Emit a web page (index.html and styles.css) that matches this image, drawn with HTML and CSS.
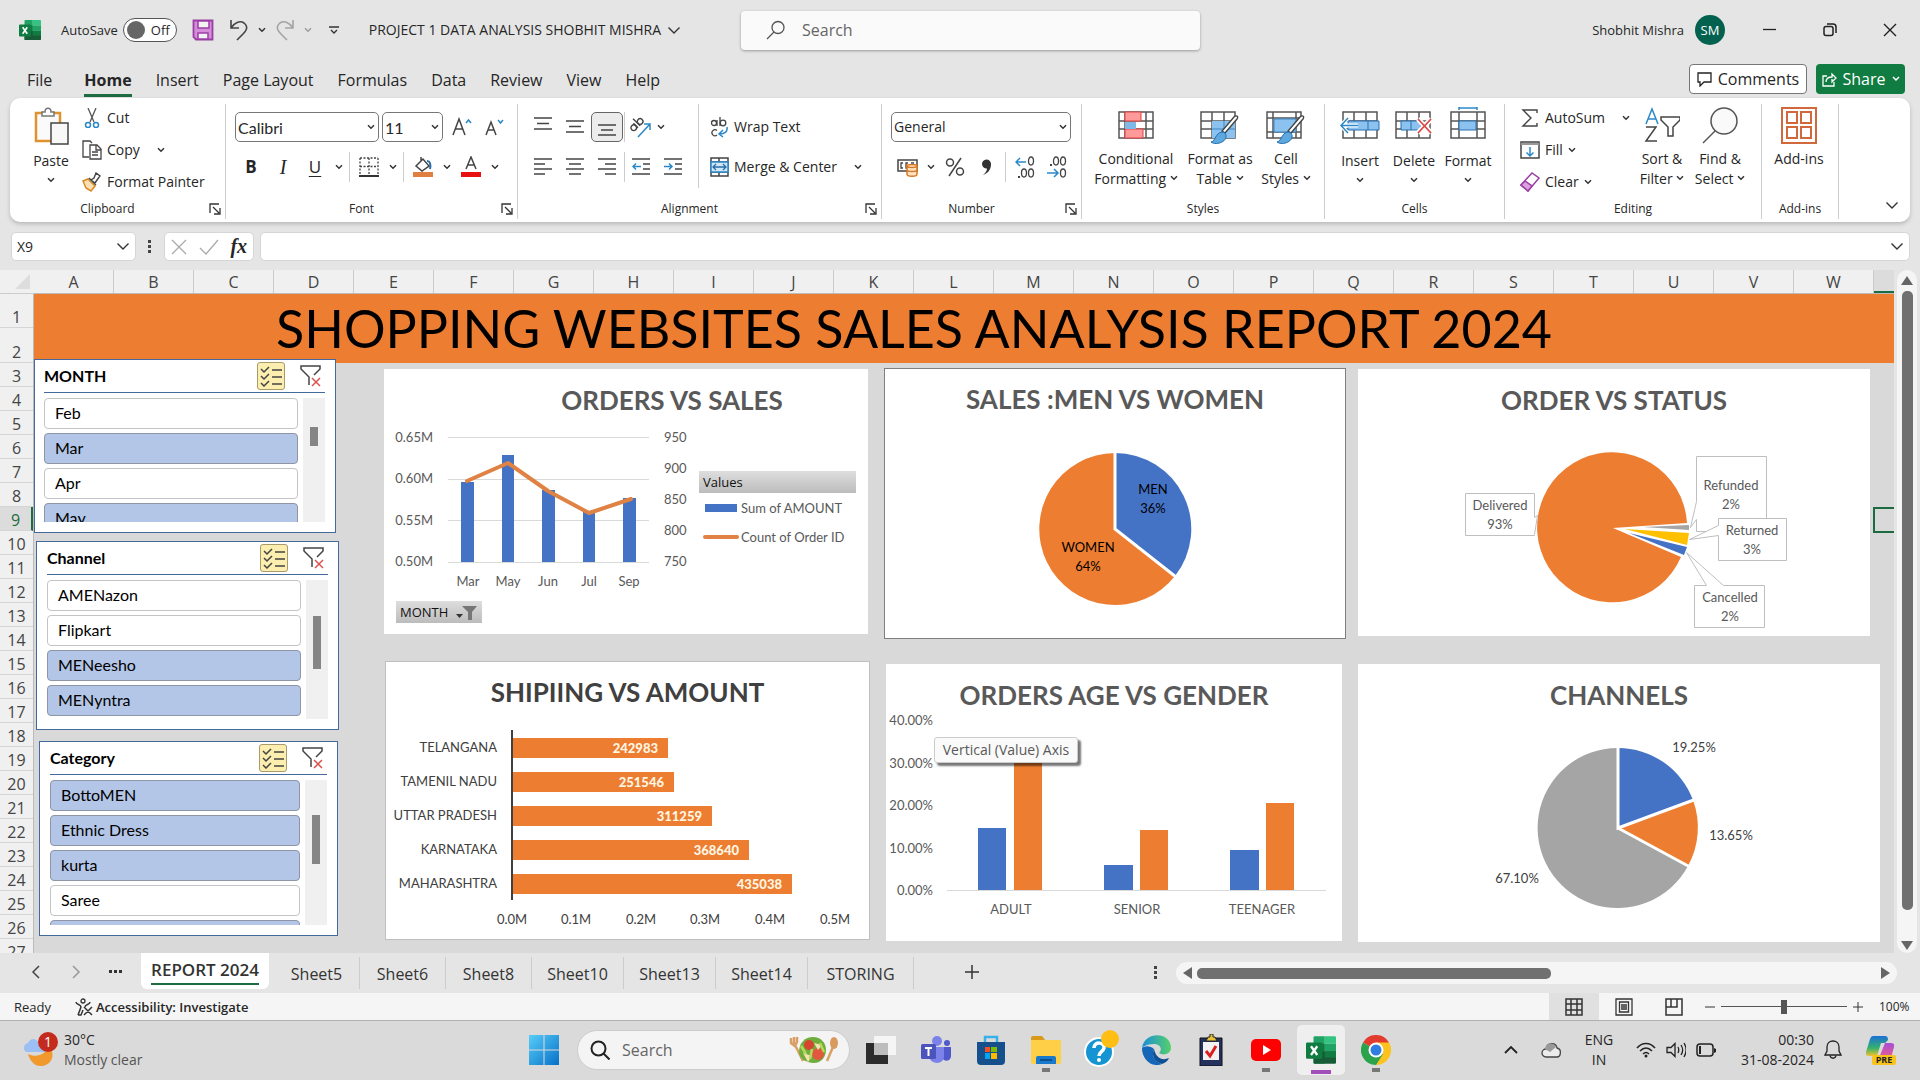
FILE: index.html
```html
<!DOCTYPE html>
<html lang="en">
<head>
<meta charset="utf-8">
<title>PROJECT 1 DATA ANALYSIS SHOBHIT MISHRA - Excel</title>
<link rel="stylesheet" href="styles.css">
</head>
<body>
<svg class="defs" aria-hidden="true">
  <symbol id="chev" viewBox="0 0 8 6"><path d="M1 1.2l3 3 3-3" fill="none" stroke="#333" stroke-width="1.5"/></symbol>
  <symbol id="chevL" viewBox="0 0 14 9"><path d="M1.5 1.5l5.500 5.500 5.500-5.500" fill="none" stroke="#333" stroke-width="1.400"/></symbol>
  <symbol id="launch" viewBox="0 0 12 12"><path d="M1 10V1h9M4 4l6 6M11 5v6H5" fill="none" stroke="#333" stroke-width="1.300"/></symbol>
  <symbol id="multi" viewBox="0 0 22 22"><path d="M1 4l3 3 5-5M1 11l3 3 5-5M1 18l3 3 5-5M12 5h10M12 12h10M12 19h10" fill="none" stroke="#444" stroke-width="1.500"/></symbol>
  <symbol id="clear" viewBox="0 0 22 22"><path d="M9 20V12L1 4V1h19v3l-6 6" fill="none" stroke="#444" stroke-width="1.500"/><path d="M12 13l8 8M20 13l-8 8" stroke="#d9534f" stroke-width="1.500"/></symbol>
  <symbol id="excel" viewBox="0 0 24 24"><path d="M7 1h8v22H7a1 1 0 0 1-1-1V2a1 1 0 0 1 1-1z" fill="#21a366"/><path d="M15 1h8a1 1 0 0 1 1 1v5h-9z" fill="#33c481"/><path d="M6 7h9v6H6z" fill="#107c41"/><path d="M15 7h9v6h-9z" fill="#21a366"/><path d="M6 13h18v9a1 1 0 0 1-1 1H7a1 1 0 0 1-1-1z" fill="#185c37"/><path d="M15 13h9v5h-9z" fill="#107c41"/><rect y="6" width="13" height="13" rx="1" fill="#107c41"/><path d="M4 9l5 7M9 9l-5 7" stroke="#fff" stroke-width="1.800"/></symbol>
</svg>

<header class="titlebar">
  <svg class="app" width="22" height="22"><use href="#excel"/></svg>
  <label class="autosave"><span>AutoSave</span><input type="checkbox" class="vh"><span class="toggle"><i></i>Off</span></label>
  <button class="tb" aria-label="Save"><svg width="22" height="22" viewBox="0 0 22 22"><path d="M1.500 1.500h19v19H4l-2.500-2.500z" fill="#d58ddb" stroke="#9b3fa5" stroke-width="1.800"/><path d="M6 2h11v7H6zM6 14h10v6H6z" fill="#f3f3f3" stroke="#9b3fa5" stroke-width="1.500"/></svg></button>
  <button class="tb undo" aria-label="Undo"><svg width="20" height="22" viewBox="0 0 20 22"><path d="M2 1v8h8M2 9C5 4 11 1 15 4c5 4 2 8-1 11l-6 6" fill="none" stroke="#444" stroke-width="1.600"/></svg><svg width="8" height="6"><use href="#chev"/></svg></button>
  <button class="tb undo off" aria-label="Redo"><svg width="20" height="22" viewBox="0 0 20 22"><path d="M18 1v8h-8M18 9C15 4 9 1 5 4 0 8 3 12 6 15l6 6" fill="none" stroke="#444" stroke-width="1.600"/></svg><svg width="8" height="6"><use href="#chev"/></svg></button>
  <button class="tb more" aria-label="Customize toolbar"><svg width="10" height="9" viewBox="0 0 10 9"><path d="M0 1h10M2 4l3 3 3-3" fill="none" stroke="#333" stroke-width="1.400"/></svg></button>
  <button class="doc">PROJECT 1 DATA ANALYSIS SHOBHIT MISHRA <svg width="14" height="9"><use href="#chevL"/></svg></button>
  <label class="search"><svg width="20" height="20" viewBox="0 0 20 20"><circle cx="12" cy="7.500" r="6" fill="none" stroke="#555" stroke-width="1.300"/><path d="M8 12l-7 7" stroke="#555" stroke-width="1.300"/></svg><input type="text" placeholder="Search" aria-label="Search"></label>
  <div class="user"><span>Shobhit Mishra</span><b>SM</b></div>
  <div class="win">
    <button aria-label="Minimize"><svg width="14" height="14"><path d="M0 6.500h13" stroke="#222" stroke-width="1.300"/></svg></button>
    <button aria-label="Restore"><svg width="14" height="14" viewBox="0 0 14 14"><rect x="1" y="3.500" width="9" height="9" rx="2" fill="none" stroke="#222" stroke-width="1.500"/><path d="M4 1h6a3 3 0 0 1 3 3v6" fill="none" stroke="#222" stroke-width="1.500"/></svg></button>
    <button aria-label="Close"><svg width="14" height="14"><path d="M1 1l12 12M13 1L1 13" stroke="#222" stroke-width="1.400"/></svg></button>
  </div>
</header>

<nav class="tabs">
  <a href="#" class="file">File</a><a href="#" class="on">Home</a><a href="#">Insert</a><a href="#">Page Layout</a><a href="#">Formulas</a><a href="#">Data</a><a href="#">Review</a><a href="#">View</a><a href="#">Help</a>
  <button class="comments"><svg width="15" height="15" viewBox="0 0 15 15"><path d="M1 1h13v9H7l-4 4v-4H1z" fill="none" stroke="#222" stroke-width="1.300"/></svg>Comments</button>
  <button class="share"><svg width="15" height="15" viewBox="0 0 15 15"><path d="M5 4H1v10h11v-4M4 10c0-4 3-5 6-5V2l4 4-4 4V7" fill="none" stroke="#fff" stroke-width="1.300"/></svg>Share<svg width="8" height="6" viewBox="0 0 8 6"><path d="M1 1l3 3 3-3" fill="none" stroke="#fff" stroke-width="1.500"/></svg></button>
</nav>

<section class="ribbon">
  <div class="group g-clip">
    <div class="body">
      <button class="big paste"><svg width="36" height="38" viewBox="0 0 36 38"><path d="M3 6h24v28H3z" fill="#fafafa" stroke="#e0922f" stroke-width="2.500"/><path d="M9 9V5h3c0-5 6-5 6 0h3v4z" fill="#fff" stroke="#777" stroke-width="1.500"/><path d="M18 16h17v21H18z" fill="#f8f8f8" stroke="#444" stroke-width="1.500"/></svg><span>Paste</span><svg width="8" height="6"><use href="#chev"/></svg></button>
      <div class="stack">
        <button><svg width="20" height="20" viewBox="0 0 20 20"><path d="M6 0l6 14M14 0L8 14" stroke="#555" stroke-width="1.300"/><circle cx="6" cy="17" r="2.500" fill="none" stroke="#2b88c8" stroke-width="1.500"/><circle cx="14" cy="17" r="2.500" fill="none" stroke="#2b88c8" stroke-width="1.500"/></svg>Cut</button>
        <button><svg width="20" height="20" viewBox="0 0 20 20"><path d="M7 17H1V1h7l2 2M8 5h7l4 4v10H8zM14 5v5h5M10 12h6M10 15h6" fill="none" stroke="#444" stroke-width="1.300"/></svg>Copy<svg class="far" width="8" height="6"><use href="#chev"/></svg></button>
        <button><svg width="20" height="20" viewBox="0 0 20 20"><path d="M1 9l5-2 7 7-4 5-5-3z" fill="#fbe0b5" stroke="#d98a1f" stroke-width="1.500"/><path d="M7 6l7 7M9 8l3-2 2-5 4 3-3 4-2 3z" fill="#fff" stroke="#444" stroke-width="1.400"/></svg>Format Painter</button>
      </div>
    </div>
    <footer><span>Clipboard</span><button class="launch" aria-label="Clipboard settings"><svg width="12" height="12"><use href="#launch"/></svg></button></footer>
  </div>

  <div class="group g-font">
    <div class="body rows">
      <div class="row">
        <div class="sel s-font"><select aria-label="Font"><option>Calibri</option></select><svg width="8" height="6"><use href="#chev"/></svg></div>
        <div class="sel s-size"><select aria-label="Font size"><option>11</option></select><svg width="8" height="6"><use href="#chev"/></svg></div>
        <button class="ib" aria-label="Increase font size"><svg width="20" height="20" viewBox="0 0 20 20"><path d="M1 18L7 2l6 16M3 12h8" fill="none" stroke="#444" stroke-width="1.500"/><path d="M14 6l2.500-3L19 6" fill="none" stroke="#2b88c8" stroke-width="1.500"/></svg></button>
        <button class="ib" aria-label="Decrease font size"><svg width="20" height="20" viewBox="0 0 20 20"><path d="M2 18L7 5l5 13M4 13h6" fill="none" stroke="#444" stroke-width="1.500"/><path d="M14 3l2.500 3L19 3" fill="none" stroke="#2b88c8" stroke-width="1.500"/></svg></button>
      </div>
      <div class="row">
        <button class="ib bold">B</button><button class="ib ital">I</button><button class="ib under">U</button><button class="ch" aria-label="Underline options"><svg width="8" height="6"><use href="#chev"/></svg></button><i class="sep"></i>
        <button class="ib" aria-label="Borders"><svg width="20" height="20" viewBox="0 0 20 20"><path d="M1 1h18M1 1v17M19 1v17M10 1v17M1 9.500h18" fill="none" stroke="#444" stroke-width="1.300" stroke-dasharray="2 1.500"/><path d="M0 19h20" stroke="#333" stroke-width="2"/></svg></button><button class="ch" aria-label="Border options"><svg width="8" height="6"><use href="#chev"/></svg></button><i class="sep"></i>
        <button class="ib" aria-label="Fill color"><svg width="22" height="22" viewBox="0 0 22 22"><path d="M4 10l7-7 6 7-7 5zM9 5V1" fill="#fff" stroke="#444" stroke-width="1.500"/><path d="M15 5c3 0 4 3 3 8" fill="none" stroke="#2b6ca8" stroke-width="2"/><path d="M1 16h20v5H1z" fill="#e08040"/></svg></button><button class="ch" aria-label="Fill options"><svg width="8" height="6"><use href="#chev"/></svg></button>
        <button class="ib" aria-label="Font color"><svg width="22" height="22" viewBox="0 0 22 22"><path d="M6 13l5-12 5 12M8 9h6" fill="none" stroke="#444" stroke-width="1.500"/><path d="M1 16h20v5H1z" fill="#e81010"/></svg></button><button class="ch" aria-label="Font color options"><svg width="8" height="6"><use href="#chev"/></svg></button>
      </div>
    </div>
    <footer><span>Font</span><button class="launch" aria-label="Font settings"><svg width="12" height="12"><use href="#launch"/></svg></button></footer>
  </div>

  <div class="group g-align">
    <div class="body">
      <div class="rows aleft">
        <div class="row">
          <button class="ib" aria-label="Top align"><svg width="18" height="20"><path d="M0 1h18M3 6.500h12M0 12h18" stroke="#444" stroke-width="1.500"/></svg></button>
          <button class="ib" aria-label="Middle align"><svg width="18" height="20"><path d="M0 4h18M3 9.500h12M0 15h18" stroke="#444" stroke-width="1.500"/></svg></button>
          <button class="ib pressed" aria-label="Bottom align"><svg width="18" height="20"><path d="M0 8h18M3 13h12M0 18h18" stroke="#444" stroke-width="1.500"/></svg></button><i class="sep"></i>
          <button class="ib" aria-label="Orientation"><svg width="22" height="22" viewBox="0 0 22 22"><g fill="none" stroke="#444" stroke-width="1.400" transform="rotate(-45 8 9)"><circle cx="3" cy="8" r="2.800"/><path d="M6 4.500v6.500M9 1v10"/><circle cx="12" cy="8" r="2.800"/></g><path d="M8 21L20 8M14 8h6v6" fill="none" stroke="#2b88c8" stroke-width="1.500"/></svg></button><button class="ch" aria-label="Orientation options"><svg width="8" height="6"><use href="#chev"/></svg></button>
        </div>
        <div class="row">
          <button class="ib" aria-label="Align left"><svg width="18" height="18"><path d="M0 1h18M0 6h11M0 11h18M0 16h11" stroke="#444" stroke-width="1.500"/></svg></button>
          <button class="ib" aria-label="Center"><svg width="18" height="18"><path d="M0 1h18M3 6h12M0 11h18M3 16h12" stroke="#444" stroke-width="1.500"/></svg></button>
          <button class="ib" aria-label="Align right"><svg width="18" height="18"><path d="M0 1h18M7 6h11M0 11h18M7 16h11" stroke="#444" stroke-width="1.500"/></svg></button><i class="sep"></i>
          <button class="ib" aria-label="Decrease indent"><svg width="18" height="18"><path d="M0 1h18M11 6h7M11 11h7M0 16h18" stroke="#444" stroke-width="1.500"/><path d="M9 8.500H1M4 5.500l-3 3 3 3" fill="none" stroke="#2b88c8" stroke-width="1.500"/></svg></button>
          <button class="ib" aria-label="Increase indent"><svg width="18" height="18"><path d="M0 1h18M11 6h7M11 11h7M0 16h18" stroke="#444" stroke-width="1.500"/><path d="M0 8.500h8M5 5.500l3 3-3 3" fill="none" stroke="#2b88c8" stroke-width="1.500"/></svg></button>
        </div>
      </div>
      <div class="rows aright">
        <div class="row"><button class="txt"><svg width="19" height="22" viewBox="0 0 19 22"><g fill="none" stroke="#444" stroke-width="1.300"><circle cx="4" cy="7" r="2.500"/><path d="M7 4v6M10 1v9"/><circle cx="13" cy="7" r="2.800"/><path d="M7 14.500a3 3 0 1 0 0 4.500"/></g><path d="M17 11c1 5-3 7-7 7M13 14l-4 4 4 3" fill="none" stroke="#2b88c8" stroke-width="1.500"/></svg>Wrap Text</button></div>
        <div class="row"><button class="txt"><svg width="19" height="20" viewBox="0 0 19 20"><path d="M1 1h17v18H1zM9 1v4M9 15v4M1 5h17M1 15h17" fill="#fff" stroke="#444" stroke-width="1.500"/><path d="M1 5h17v10H1z" fill="#cfe7f8" stroke="#2b88c8" stroke-width="1.500"/><path d="M3 10h13M6 7l-3 3 3 3M13 7l3 3-3 3" fill="none" stroke="#2b6ca8" stroke-width="1.300"/></svg>Merge &amp; Center<svg class="far" width="8" height="6"><use href="#chev"/></svg></button></div>
      </div>
    </div>
    <footer><span>Alignment</span><button class="launch" aria-label="Alignment settings"><svg width="12" height="12"><use href="#launch"/></svg></button></footer>
  </div>

  <div class="group g-num">
    <div class="body rows">
      <div class="row"><div class="sel s-num"><select aria-label="Number format"><option>General</option></select><svg width="8" height="6"><use href="#chev"/></svg></div></div>
      <div class="row">
        <button class="ib" aria-label="Currency"><svg width="21" height="20" viewBox="0 0 21 20"><path d="M1 3h19v11H1z" fill="#fff" stroke="#444" stroke-width="1.500"/><path d="M6 6H4v5h2M11 6H9v5h2M14 6h3" fill="none" stroke="#444" stroke-width="1.300"/><path d="M10 9c0-2 10-2 10 0v8c0 3-10 3-10 0z" fill="#fde3c8" stroke="#d9771f" stroke-width="1.500"/><path d="M10 9c0 2 10 2 10 0M10 13c0 2 10 2 10 0" fill="none" stroke="#d9771f" stroke-width="1.500"/></svg></button><button class="ch" aria-label="Currency options"><svg width="8" height="6"><use href="#chev"/></svg></button>
        <button class="ib" aria-label="Percent"><svg width="20" height="20"><circle cx="5" cy="5.500" r="3.500" fill="none" stroke="#444" stroke-width="1.500"/><circle cx="15" cy="14.500" r="3.500" fill="none" stroke="#444" stroke-width="1.500"/><path d="M16 1L4 19" stroke="#444" stroke-width="1.500"/></svg></button>
        <button class="ib" aria-label="Comma"><svg width="12" height="18"><path d="M2 17c5-2 8-5 8-11a4.500 4.500 0 1 0-4 4.500c0 2-1 4-4 6.500z" fill="#333"/></svg></button><i class="sep"></i>
        <button class="ib" aria-label="Increase decimal"><svg width="20" height="22" viewBox="0 0 20 22"><g fill="none" stroke="#444" stroke-width="1.300"><ellipse cx="16" cy="5" rx="2.500" ry="4"/><ellipse cx="9" cy="17" rx="2.500" ry="4"/><ellipse cx="16" cy="17" rx="2.500" ry="4"/></g><path d="M3 20h2v2H3z" fill="#444"/><path d="M11 6H1M5 2L1 6l4 4" fill="none" stroke="#2b88c8" stroke-width="1.500"/></svg></button>
        <button class="ib" aria-label="Decrease decimal"><svg width="20" height="22" viewBox="0 0 20 22"><g fill="none" stroke="#444" stroke-width="1.300"><ellipse cx="16" cy="17" rx="2.500" ry="4"/><ellipse cx="9" cy="5" rx="2.500" ry="4"/><ellipse cx="16" cy="5" rx="2.500" ry="4"/></g><path d="M3 8h2v2H3z" fill="#444"/><path d="M0 17h11M7 13l4 4-4 4" fill="none" stroke="#2b88c8" stroke-width="1.500"/></svg></button>
      </div>
    </div>
    <footer><span>Number</span><button class="launch" aria-label="Number settings"><svg width="12" height="12"><use href="#launch"/></svg></button></footer>
  </div>

  <div class="group g-styles">
    <div class="body bigs">
      <button class="big w96"><svg width="36" height="38" viewBox="0 0 36 38"><path d="M1 5h34v26H1zM7 5v26M28 5v26M1 14h34M1 22h34" fill="#fff" stroke="#555" stroke-width="1.500"/><path d="M7 5h16v9H7zM7 22h18v9H7z" fill="#ff9a9a" stroke="#e04040"/><path d="M7 15h11v7H7z" fill="#80b8e8"/></svg><span>Conditional<br>Formatting <svg width="8" height="6"><use href="#chev"/></svg></span></button>
      <button class="big w68"><svg width="40" height="38" viewBox="0 0 40 38"><path d="M1 5h34v26H1zM12 5v26M24 5v26M1 14h34M1 22h34" fill="#fff" stroke="#555" stroke-width="1.500"/><path d="M12 14h23v17H12z" fill="#8cc2f0"/><path d="M24 14v17M12 22h23" stroke="#3b87c8"/><path d="M37 12L25 26l-3-2 12-14c2-2 5-1 3 2z" fill="#fff" stroke="#444" stroke-width="1.400"/><path d="M22 25c5 0 6 7 0 10-4 2-8 2-11 0 5-1 4-9 11-10z" fill="#5ea8e0" stroke="#2670b0"/></svg><span>Format as<br>Table <svg width="8" height="6"><use href="#chev"/></svg></span></button>
      <button class="big w68"><svg width="40" height="38" viewBox="0 0 40 38"><path d="M1 5h34v26H1zM7 5v26M30 5v26M1 11h34M1 25h34" fill="#fff" stroke="#555" stroke-width="1.500"/><path d="M8 12h22v13H8z" fill="#8cc2f0" stroke="#3b87c8"/><path d="M37 12L25 26l-3-2 12-14c2-2 5-1 3 2z" fill="#fff" stroke="#444" stroke-width="1.400"/><path d="M22 25c5 0 6 7 0 10-4 2-8 2-11 0 5-1 4-9 11-10z" fill="#5ea8e0" stroke="#2670b0"/></svg><span>Cell<br>Styles <svg width="8" height="6"><use href="#chev"/></svg></span></button>
    </div>
    <footer><span>Styles</span></footer>
  </div>

  <div class="group g-cells">
    <div class="body bigs">
      <button class="big w54"><svg width="40" height="38" viewBox="0 0 40 38"><path d="M3 5h34v26H3zM14 5v26M26 5v26M3 14h34M3 22h34" fill="#fff" stroke="#555" stroke-width="1.500"/><path d="M8 14h31v9H8z" fill="#8cc2f0" stroke="#2670b0"/><path d="M28 14v9" stroke="#2670b0"/><path d="M18 18.500H1M8 11l-7 7.500L8 26" fill="none" stroke="#fff" stroke-width="4"/><path d="M18 18.500H1M8 11l-7 7.500L8 26" fill="none" stroke="#2b88c8" stroke-width="1.500"/></svg><span>Insert</span><svg width="8" height="6"><use href="#chev"/></svg></button>
      <button class="big w54"><svg width="38" height="38" viewBox="0 0 38 38"><path d="M1 5h34v26H1zM12 5v26M24 5v26M1 14h34M1 22h34" fill="#fff" stroke="#555" stroke-width="1.500"/><path d="M6 14h20v9H6z" fill="#8cc2f0" stroke="#2670b0"/><path d="M16 14v9" stroke="#2670b0"/><path d="M23 12l13 14M36 12L23 26" stroke="#fff" stroke-width="5"/><path d="M23 12l13 14M36 12L23 26" stroke="#e04545" stroke-width="1.800"/></svg><span>Delete</span><svg width="8" height="6"><use href="#chev"/></svg></button>
      <button class="big w54"><svg width="36" height="38" viewBox="0 0 36 38"><path d="M1 5h34v26H1zM9 5v26M27 5v26M1 14h34M1 22h34" fill="#fff" stroke="#555" stroke-width="1.500"/><path d="M9 14h17v9H9z" fill="#8cc2f0" stroke="#2670b0"/><path d="M9 1h18M9-1v4M27-1v4" stroke="#2b88c8" stroke-width="1.500"/></svg><span>Format</span><svg width="8" height="6"><use href="#chev"/></svg></button>
    </div>
    <footer><span>Cells</span></footer>
  </div>

  <div class="group g-edit">
    <div class="body">
      <div class="stack">
        <button><svg width="20" height="20" viewBox="0 0 20 20"><path d="M17 5V2H3l8 8-8 8h14v-3" fill="none" stroke="#444" stroke-width="1.400"/></svg>AutoSum<svg class="far" width="8" height="6"><use href="#chev"/></svg></button>
        <button><svg width="20" height="20" viewBox="0 0 20 20"><path d="M1 2h18v16H1z" fill="#fff" stroke="#444" stroke-width="1.500"/><path d="M1 4h18" stroke="#999" stroke-width="2"/><path d="M10 7v9M6.500 12.500L10 16l3.500-3.500" fill="none" stroke="#2b88c8" stroke-width="1.500"/></svg>Fill <svg width="8" height="6"><use href="#chev"/></svg></button>
        <button><svg width="20" height="20" viewBox="0 0 20 20"><path d="M1 13L12 1l7 5L8 19z" fill="#fff" stroke="#9b3fa5" stroke-width="1.500"/><path d="M1 13l4-4 7 5-4 5z" fill="#dca0e0" stroke="#9b3fa5" stroke-width="1.500"/></svg>Clear <svg width="8" height="6"><use href="#chev"/></svg></button>
      </div>
      <div class="bigs">
        <button class="big w58"><svg width="36" height="38" viewBox="0 0 36 38"><path d="M2 17L8 2l6 15M4 12h8" fill="none" stroke="#2b88c8" stroke-width="1.500"/><path d="M2 20h10L2 34h11" fill="none" stroke="#444" stroke-width="1.500"/><path d="M17 10h19v3l-7 7v9h-5v-9l-7-7z" fill="#fff" stroke="#444" stroke-width="1.500"/></svg><span>Sort &amp;<br>Filter <svg width="8" height="6"><use href="#chev"/></svg></span></button>
        <button class="big w58"><svg width="36" height="38" viewBox="0 0 36 38"><circle cx="22" cy="14" r="13" fill="#fafafa" stroke="#555" stroke-width="1.500"/><path d="M13 24L1 36" stroke="#555" stroke-width="1.500"/></svg><span>Find &amp;<br>Select <svg width="8" height="6"><use href="#chev"/></svg></span></button>
      </div>
    </div>
    <footer><span>Editing</span></footer>
  </div>

  <div class="group g-add">
    <div class="body bigs"><button class="big w68"><svg width="36" height="38" viewBox="0 0 36 38"><path d="M1 1h34v35H1zM6 5h10v11H6zM20 5h10v11H20zM6 20h10v11H6zM20 20h10v11H20z" fill="none" stroke="#d2693c" stroke-width="2"/></svg><span>Add-ins</span></button></div>
    <footer><span>Add-ins</span></footer>
  </div>
  <button class="collapse" aria-label="Collapse ribbon"><svg width="14" height="9"><use href="#chevL"/></svg></button>
</section>

<section class="fbar">
  <label class="namebox"><input type="text" value="X9" aria-label="Name box"><svg width="14" height="9"><use href="#chevL"/></svg></label>
  <svg class="dots" width="4" height="16"><path d="M0 1h3v3H0zM0 6h3v3H0zM0 11h3v3H0z" fill="#444"/></svg>
  <div class="fx">
    <button aria-label="Cancel"><svg width="16" height="16"><path d="M1 1l14 14M15 1L1 15" stroke="#aaa" stroke-width="1.300"/></svg></button>
    <button aria-label="Enter"><svg width="20" height="16"><path d="M1 9l6 6L19 1" fill="none" stroke="#aaa" stroke-width="1.300"/></svg></button>
    <button class="f">fx</button>
  </div>
  <label class="formula"><input type="text" aria-label="Formula bar"><svg width="14" height="9"><use href="#chevL"/></svg></label>
</section>

<main class="sheet">
  <div class="corner"><svg width="16" height="16"><path d="M15 0v15H0z" fill="#ddd"/></svg></div>
  <div class="cols"><span>A</span><span>B</span><span>C</span><span>D</span><span>E</span><span>F</span><span>G</span><span>H</span><span>I</span><span>J</span><span>K</span><span>L</span><span>M</span><span>N</span><span>O</span><span>P</span><span>Q</span><span>R</span><span>S</span><span>T</span><span>U</span><span>V</span><span>W</span><span class="cur"></span></div>
  <div class="vscroll"><svg width="12" height="10"><path d="M6 0l6 9H0z" fill="#666"/></svg><i></i><svg width="12" height="10"><path d="M6 9l6-9H0z" fill="#666"/></svg></div>
  <div class="nums"><span class="tall">1</span><span class="tall">2</span><span>3</span><span>4</span><span>5</span><span>6</span><span>7</span><span>8</span><span class="cur">9</span><span>10</span><span>11</span><span>12</span><span>13</span><span>14</span><span>15</span><span>16</span><span>17</span><span>18</span><span>19</span><span>20</span><span>21</span><span>22</span><span>23</span><span>24</span><span>25</span><span>26</span><span>27</span></div>
  <div class="canvas">
    <h1>SHOPPING WEBSITES SALES ANALYSIS REPORT 2024</h1>
    <i class="cell"></i>
    <div class="board">
      <div class="slicers">
        <section class="slicer s1">
          <header><h3>MONTH</h3><button class="ms" aria-label="Multi-select"><svg width="22" height="22"><use href="#multi"/></svg></button><button aria-label="Clear filter"><svg width="22" height="22"><use href="#clear"/></svg></button></header>
          <div class="list"><div class="items"><button>Feb</button><button class="on">Mar</button><button>Apr</button><button class="on">May</button></div><div class="track"><i></i></div></div>
        </section>
        <section class="slicer s2">
          <header><h3>Channel</h3><button class="ms" aria-label="Multi-select"><svg width="22" height="22"><use href="#multi"/></svg></button><button aria-label="Clear filter"><svg width="22" height="22"><use href="#clear"/></svg></button></header>
          <div class="list"><div class="items"><button>AMENazon</button><button>Flipkart</button><button class="on">MENeesho</button><button class="on">MENyntra</button></div><div class="track"><i></i></div></div>
        </section>
        <section class="slicer s3">
          <header><h3>Category</h3><button class="ms" aria-label="Multi-select"><svg width="22" height="22"><use href="#multi"/></svg></button><button aria-label="Clear filter"><svg width="22" height="22"><use href="#clear"/></svg></button></header>
          <div class="list"><div class="items"><button class="on">BottoMEN</button><button class="on">Ethnic Dress</button><button class="on">kurta</button><button>Saree</button><button class="on" aria-label="Next item"></button></div><div class="track"><i></i></div></div>
        </section>
      </div>
      <div class="charts">
        <section class="chart c1">
          <h2>ORDERS VS SALES</h2>
          <svg viewBox="0 46 484 180">
            <path d="M64 68.500h201M64 110.500h201M64 151.500h201M64 193.500h201" stroke="#d9d9d9"/>
            <path d="M77 113h13v80H77zM118 86h12v107h-12zM158 121h13v72h-13zM199 143h12v50h-12zM239 129h13v64h-13z" fill="#4472c4"/>
            <path d="M83 112l41-18 40 28 41 22 42-14" fill="none" stroke="#df8244" stroke-width="4" stroke-linecap="round" stroke-linejoin="round"/>
            <g text-anchor="end"><text x="49" y="73">0.65M</text><text x="49" y="114">0.60M</text><text x="49" y="156">0.55M</text><text x="49" y="197">0.50M</text></g>
            <text x="280" y="73">950</text><text x="280" y="104">900</text><text x="280" y="135">850</text><text x="280" y="166">800</text><text x="280" y="197">750</text>
            <g text-anchor="middle"><text x="84" y="217">Mar</text><text x="124" y="217">May</text><text x="164" y="217">Jun</text><text x="205" y="217">Jul</text><text x="245" y="217">Sep</text></g>
            <linearGradient id="gr" x2="0" y2="1"><stop stop-color="#dedede"/><stop offset="1" stop-color="#bcbcbc"/></linearGradient>
            <path d="M315 102h157v22H315z" fill="url(#gr)"/><text x="319" y="118" class="ui">Values</text>
            <path d="M321 135h32v8h-32z" fill="#4472c4"/><text x="357" y="144">Sum of AMOUNT</text>
            <path d="M321 168h32" stroke="#df8244" stroke-width="4" stroke-linecap="round"/><text x="357" y="173">Count of Order ID</text>
          </svg>
          <button class="field">MONTH<svg width="22" height="15" viewBox="0 0 22 15"><path d="M0 9h7l-3.500 4z" fill="#333"/><path d="M6 1h15l-5 6v8h-4V7z" fill="#777"/></svg></button>
        </section>
        <section class="chart c2">
          <h2>SALES :MEN VS WOMEN</h2>
          <svg viewBox="0 46 462 225">
            <path d="M231 161L291 208A76 76 0 1 1 231 85z" fill="#ed7d31"/><path d="M231 161V85A76 76 0 0 1 291 208z" fill="#4472c4"/>
            <path d="M231 84v77l61 48" fill="none" stroke="#fff" stroke-width="3"/>
            <g text-anchor="middle" class="blk"><text x="269" y="126">MEN</text><text x="269" y="145">36%</text><text x="204" y="184">WOMEN</text><text x="204" y="203">64%</text></g>
          </svg>
        </section>
        <section class="chart c3">
          <h2>ORDER VS STATUS</h2>
          <svg viewBox="0 46 512 221">
            <path d="M255 159l68 29a75 75 0 1 1 6-34z" fill="#ed7d31"/>
            <path d="M285 158l46-2v5z" fill="#a5a5a5"/><path d="M267 160l64 4-2 12z" fill="#ffc000"/><path d="M271 164l58 14-3 8z" fill="#4472c4"/>
            <g fill="#fff" stroke="#bfbfbf"><path d="M107.500 124.500h69v24l3-2-3 19v1h-69z"/><path d="M338.500 87.500h70v75h-70v-12l-6 8 6-26z"/><path d="M360.500 149.500h68v42h-68v-25l-29 4 29-14z"/><path d="M336.500 216.500h12l-20-33 37 33h41v42h-70z"/></g>
            <g text-anchor="middle"><text x="142" y="141">Delivered</text><text x="142" y="160">93%</text><text x="373" y="121">Refunded</text><text x="373" y="140">2%</text><text x="394" y="166">Returned</text><text x="394" y="185">3%</text><text x="372" y="233">Cancelled</text><text x="372" y="252">2%</text></g>
          </svg>
        </section>
        <section class="chart c4">
          <h2>SHIPIING VS AMOUNT</h2>
          <svg viewBox="0 46 485 233">
            <path d="M128 77h155v20H128zM128 111h161v20H128zM128 145h199v20H128zM128 179h236v20H128zM128 213h279v20H128z" fill="#ed7d31"/>
            <path d="M127 69v170" stroke="#404040" stroke-width="2"/>
            <g text-anchor="end"><text x="112" y="91">TELANGANA</text><text x="112" y="125">TAMENIL NADU</text><text x="112" y="159">UTTAR PRADESH</text><text x="112" y="193">KARNATAKA</text><text x="112" y="227">MAHARASHTRA</text></g>
            <g text-anchor="end" class="val"><text x="273" y="92">242983</text><text x="279" y="126">251546</text><text x="317" y="160">311259</text><text x="354" y="194">368640</text><text x="397" y="228">435038</text></g>
            <g text-anchor="middle"><text x="127" y="263">0.0M</text><text x="191" y="263">0.1M</text><text x="256" y="263">0.2M</text><text x="320" y="263">0.3M</text><text x="385" y="263">0.4M</text><text x="450" y="263">0.5M</text></g>
          </svg>
        </section>
        <section class="chart c5">
          <h2>ORDERS AGE VS GENDER</h2>
          <svg viewBox="0 46 456 231">
            <path d="M61 226.500h379" stroke="#d9d9d9"/>
            <path d="M92 164h28v62H92zM218 201h29v25h-29zM344 186h29v40h-29z" fill="#4472c4"/>
            <path d="M128 90h28v136h-28zM254 166h28v60h-28zM380 139h28v87h-28z" fill="#ed7d31"/>
            <g text-anchor="end"><text x="47" y="61">40.00%</text><text x="47" y="104">30.00%</text><text x="47" y="146">20.00%</text><text x="47" y="189">10.00%</text><text x="47" y="231">0.00%</text></g>
            <g text-anchor="middle"><text x="125" y="250">ADULT</text><text x="251" y="250">SENIOR</text><text x="376" y="250">TEENAGER</text></g>
          </svg>
          <div class="tip">Vertical (Value) Axis</div>
        </section>
        <section class="chart c6">
          <h2>CHANNELS</h2>
          <svg viewBox="0 46 522 232">
            <path d="M260 164L330 202A80 80 0 1 1 260 84z" fill="#a5a5a5"/><path d="M260 164V84a80 80 0 0 1 75 52z" fill="#4472c4"/><path d="M260 164l75-28a80 80 0 0 1-5 66z" fill="#ed7d31"/>
            <path d="M260 83v81l77-28.500M260 164l72 39" fill="none" stroke="#fff" stroke-width="3"/>
            <g text-anchor="middle" class="dk"><text x="336" y="88">19.25%</text><text x="373" y="176">13.65%</text><text x="159" y="219">67.10%</text></g>
          </svg>
        </section>
      </div>
    </div>
  </div>
</main>

<nav class="sheets">
  <div class="nav"><button aria-label="Previous sheet"><svg width="10" height="14"><path d="M8 1L2 7l6 6" fill="none" stroke="#444" stroke-width="1.500"/></svg></button><button aria-label="Next sheet"><svg width="10" height="14"><path d="M2 1l6 6-6 6" fill="none" stroke="#999" stroke-width="1.500"/></svg></button><button aria-label="All sheets"><svg width="16" height="6"><path d="M1 1h3v3H1zM6 1h3v3H6zM11 1h3v3h-3z" fill="#333"/></svg></button></div>
  <a href="#" class="on"><span>REPORT 2024</span></a><a href="#">Sheet5</a><a href="#">Sheet6</a><a href="#">Sheet8</a><a href="#" class="w">Sheet10</a><a href="#" class="w">Sheet13</a><a href="#" class="w">Sheet14</a><a href="#" class="w2">STORING</a>
  <button class="plus" aria-label="New sheet"><svg width="16" height="16"><path d="M8 1v14M1 8h14" stroke="#333" stroke-width="1.500"/></svg></button>
  <svg class="dots" width="4" height="16"><path d="M0 1h3v3H0zM0 6h3v3H0zM0 11h3v3H0z" fill="#444"/></svg>
  <div class="hscroll"><svg width="10" height="12"><path d="M0 6l9-6v12z" fill="#666"/></svg><i></i><svg width="10" height="12"><path d="M10 6L1 0v12z" fill="#666"/></svg></div>
</nav>

<footer class="status">
  <span class="ready">Ready</span>
  <button class="acc"><svg width="18" height="18" viewBox="0 0 18 18"><circle cx="8" cy="3" r="2" fill="none" stroke="#333" stroke-width="1.300"/><path d="M1 4c0 3 5 2 5 5l-3 8M15 4c0 3-5 2-5 5M3 17l3 0 2-5M9 9l8 8M17 9l-8 8" fill="none" stroke="#333" stroke-width="1.500"/></svg>Accessibility: Investigate</button>
  <div class="views"><button class="on" aria-label="Normal"><svg width="18" height="18"><path d="M1 1h16v16H1zM6 1v16M12 1v16M1 6h16M1 12h16" fill="none" stroke="#333" stroke-width="1.500"/></svg></button><button aria-label="Page layout"><svg width="18" height="18"><path d="M1 1h16v16H1zM4.500 4h9v10h-9zM6 7h6M6 9h6M6 11h6" fill="none" stroke="#333" stroke-width="1.300"/></svg></button><button aria-label="Page break"><svg width="18" height="18"><path d="M1 1h16v16H1zM1 9h11V1M6 1v8" fill="none" stroke="#333" stroke-width="1.500"/></svg></button></div>
  <button class="zb" aria-label="Zoom out"><svg width="10" height="10"><path d="M0 5h10" stroke="#333"/></svg></button>
  <input type="range" aria-label="Zoom" value="50">
  <button class="zb" aria-label="Zoom in"><svg width="10" height="10"><path d="M0 5h10M5 0v10" stroke="#333"/></svg></button>
  <span class="pct">100%</span>
</footer>

<footer class="taskbar">
  <button class="weather"><svg width="36" height="36" viewBox="0 0 36 36"><path d="M4 20a5 5 0 0 1 2-9c2-5 8-5 10-1l8 1v9z" fill="#9cc0f5"/><path d="M6 22c8 4 18 1 20-8 8 6 5 19-6 20-7 1-12-5-14-12z" fill="#f2992e"/><circle cx="26" cy="10" r="10" fill="#c42b1c"/><text x="26" y="15" text-anchor="middle" class="badge">1</text></svg><span>30°C<br><em>Mostly clear</em></span></button>
  <div class="apps">
    <button aria-label="Start"><svg width="30" height="30" viewBox="0 0 30 30"><linearGradient id="w" x2="1" y2="1"><stop stop-color="#58cdf8"/><stop offset="1" stop-color="#0670c8"/></linearGradient><path d="M0 0h14.500v14.500H0zM15.500 0H30v14.500H15.500zM0 15.500h14.500V30H0zM15.500 15.500H30V30H15.500z" fill="url(#w)"/></svg></button>
    <label class="tsearch"><svg width="20" height="20" viewBox="0 0 20 20"><circle cx="8.500" cy="8.500" r="7" fill="none" stroke="#222" stroke-width="2"/><path d="M13.500 13.500l6 6" stroke="#222" stroke-width="2"/></svg><input type="text" placeholder="Search" aria-label="Search Windows"><svg width="52" height="30" viewBox="0 0 52 30"><path d="M8 10l8 16M4 3v5l4 3 2-4V2M7 2v7M46 12l-6 14" fill="none" stroke="#d9a066" stroke-width="2.500"/><ellipse cx="47" cy="8" rx="4" ry="6" fill="#d99a5e"/><path d="M12 17c0-9 6-15 14-15s13 6 13 13-5 13-12 13-15-4-15-11z" fill="#6fae3d"/><circle cx="22" cy="10" r="5" fill="#d6452f"/><circle cx="31" cy="19" r="6" fill="#e2583e"/><path d="M16 18l9 3-4 6zM27 8l8 2-4 5z" fill="#f5e3b5"/><path d="M14 11l5 8M25 14l-2 10M33 8l4 9" stroke="#b6d95c" stroke-width="2.500"/></svg></label>
    <button aria-label="Task view"><svg width="30" height="30" viewBox="0 0 30 30"><path d="M0 8h22v21H0z" fill="#2c2c2c"/><path d="M8 1h22v19H8z" fill="#f5f5f5"/><path d="M8 8h14v12H8z" fill="#bdbdbd"/></svg></button>
    <button aria-label="Teams"><svg width="30" height="30" viewBox="0 0 30 30"><circle cx="16" cy="6" r="5" fill="#7b83eb"/><circle cx="26" cy="8" r="3" fill="#5059c9"/><path d="M20 12h10v9c0 5-6 6-8 3z" fill="#5059c9"/><path d="M8 12h15v9c0 9-13 9-15 1z" fill="#7b83eb"/><rect y="9" width="15" height="15" rx="1.500" fill="#4b53bc"/><path d="M4 13h7M7.500 13v8" stroke="#fff" stroke-width="2"/></svg></button>
    <button aria-label="Store"><svg width="30" height="30" viewBox="0 0 30 30"><path d="M9 8V2h12v6" fill="none" stroke="#38b0e8" stroke-width="2.500"/><path d="M1 7h28v19q0 4-4 4H5q-4 0-4-4z" fill="#15508c"/><path d="M9 12h5v5H9z" fill="#f25022"/><path d="M15 12h6v5h-6z" fill="#7fba00"/><path d="M9 18h5v6H9z" fill="#00a4ef"/><path d="M15 18h6v6h-6z" fill="#ffb900"/></svg></button>
    <button class="run" aria-label="File Explorer"><svg width="30" height="30" viewBox="0 0 30 30"><path d="M0 3q0-2 2-2h9l4 5H0z" fill="#d99a1c"/><path d="M0 5h30v22q0 2-2 2H2q-2 0-2-2z" fill="#ffcf48"/><path d="M5 29v-6q0-2 2-2h16q2 0 2 2v6z" fill="#1979ca"/><path d="M9 25h12" stroke="#0c5090" stroke-width="2"/></svg></button>
    <button aria-label="Get help"><svg width="36" height="40" viewBox="0 0 36 40"><circle cx="16" cy="22" r="14" fill="#1494d2" stroke="#fff" stroke-width="2"/><path d="M11 18c0-7 11-6 10 0-1 4-5 4-5 8" fill="none" stroke="#fff" stroke-width="3.500"/><circle cx="16" cy="30" r="2" fill="#fff"/><circle cx="27" cy="9" r="9" fill="#ffbe14"/></svg></button>
    <button aria-label="Edge"><svg width="30" height="30" viewBox="0 0 30 30"><linearGradient id="e" x2="1"><stop stop-color="#1b8fd8"/><stop offset="1" stop-color="#55d06a"/></linearGradient><path d="M1 13C3-4 30-4 30 13c0 6-8 8-12 5 4-4 1-9-5-9C6 9 1 12 1 13z" fill="url(#e)"/><path d="M1 13c0 12 10 20 20 16-7-2-11-8-8-15-4-4-10-3-12-1z" fill="#1466b8"/><path d="M13 14c-3 7 1 13 8 15 3-1 6-3 7-6-7 3-13 0-15-9z" fill="#0f4f96"/></svg></button>
    <button aria-label="Clipboard app"><svg width="30" height="32" viewBox="0 0 30 32"><path d="M4 4h22v28H4z" fill="#24305e" stroke="#111"/><path d="M7 8h16v18H7z" fill="#f2f2f2"/><path d="M10 7l2-4h2V0h3v3h2l2 4z" fill="#e8c33a" stroke="#222"/><path d="M10 17l4 5 6-10" fill="none" stroke="#d82020" stroke-width="3"/></svg></button>
    <button class="run" aria-label="YouTube"><svg width="30" height="30"><rect y="4" width="30" height="22" rx="5" fill="#f00"/><path d="M12 10l8 5-8 5z" fill="#fff"/></svg></button>
    <button class="run act" aria-label="Excel"><svg width="30" height="30"><use href="#excel"/></svg></button>
    <button class="run" aria-label="Chrome"><svg width="30" height="30" viewBox="0 0 30 30"><path d="M15 15L2 7.500A15 15 0 0 1 28 7.500z" fill="#e33b2e"/><path d="M15 15V7.500h13A15 15 0 0 1 15 30z" fill="#fcc31e"/><path d="M15 15l7 4-7 11A15 15 0 0 1 2 7.500z" fill="#2ba24c"/><circle cx="15" cy="15" r="7.500" fill="#fff"/><circle cx="15" cy="15" r="5.500" fill="#2f7de1"/></svg></button>
  </div>
  <div class="tray">
    <button aria-label="Hidden icons"><svg width="14" height="9"><path d="M1 8l6-6 6 6" fill="none" stroke="#222" stroke-width="1.800"/></svg></button>
    <button class="od" aria-label="OneDrive"><svg width="20" height="16" viewBox="0 0 20 16"><path d="M5 15a4 4 0 0 1 0-8c1-7 10-7 11-1 5 1 4 9 0 9z" fill="#ececec" stroke="#444" stroke-width="1.300"/><path d="M4 7c1-7 9-7 11-2l-6 5z" fill="#999"/></svg></button>
    <button class="lang">ENG<br>IN</button>
    <button class="net" aria-label="Network, sound, battery"><svg width="20" height="16" viewBox="0 0 20 16"><path d="M1 6c5-6 13-6 18 0M4 9c4-4 8-4 12 0M7 12c2-2 4-2 6 0" fill="none" stroke="#222" stroke-width="1.500"/><circle cx="10" cy="14" r="1.500" fill="#222"/></svg><svg width="20" height="16" viewBox="0 0 20 16"><path d="M1 5.500h4l4-4v13l-4-4H1zM12 5c1 2 1 4 0 6M15 3c2 3 2 7 0 10M18 1c3 5 3 9 0 14" fill="none" stroke="#222" stroke-width="1.300"/></svg><svg width="20" height="16" viewBox="0 0 20 16"><rect x="1" y="2" width="16" height="12" rx="3" fill="none" stroke="#222" stroke-width="1.500"/><path d="M4 4v8" stroke="#222" stroke-width="2"/><path d="M18 6l2 1v3l-2 1z" fill="#222"/></svg></button>
    <button class="clock">00:30<br>31-08-2024</button>
    <button class="bell" aria-label="Notifications"><svg width="18" height="20" viewBox="0 0 18 20"><path d="M1 15h16l-2-4V7C15-1 3-1 3 7v4zM6 16c1 3 5 3 6 0" fill="none" stroke="#222" stroke-width="1.300"/></svg></button>
    <button aria-label="Copilot"><svg width="30" height="30" viewBox="0 0 30 30"><linearGradient id="cp" x2="0" y2="1"><stop stop-color="#1b6fd8"/><stop offset=".6" stop-color="#35b26b"/><stop offset="1" stop-color="#f2c12e"/></linearGradient><linearGradient id="cq" x2="0" y2="1"><stop stop-color="#a450d8"/><stop offset="1" stop-color="#ee5a8a"/></linearGradient><path d="M7 1h12q3 0 3 4l-3 3h-4l-4 13H3q-4 0-3-4L4 4q1-3 3-3z" fill="url(#cp)"/><path d="M19 8h6q4 0 3 4l-3 11H13z" fill="url(#cq)"/><rect x="6" y="20" width="24" height="10" rx="2" fill="#f9c31c"/><text x="18" y="28" text-anchor="middle" class="pre">PRE</text></svg></button>
  </div>
</footer>
</body>
</html>
```
FILE: styles.css
```css
* { box-sizing: border-box; }
html, body { margin: 0; height: 100%; }
body {
  display: flex; flex-direction: column; min-height: 100vh; overflow: hidden;
  background: #e5e5e5; color: #262626;
  font: 14px/20px "Open Sans", "Noto Sans", sans-serif;
}
button, input, select { font: inherit; color: inherit; border: 0; background: none; padding: 0; margin: 0; }
button { display: flex; align-items: center; justify-content: center; white-space: nowrap; }
input { min-width: 0; outline: 0; }
a { color: inherit; text-decoration: none; }
h1, h2, h3 { margin: 0; }
svg { flex: none; display: block; }
.defs { position: absolute; width: 0; height: 0; }
.vh { position: absolute; opacity: 0; }

/* Title bar */
.titlebar { display: flex; align-items: center; height: 60px; padding: 0 0 0 19px; position: relative; flex: none; }
.autosave { display: flex; align-items: center; gap: 5px; margin-left: 20px; font-size: 13px; }
.toggle { display: flex; align-items: center; gap: 6px; width: 54px; height: 24px; padding-left: 3px; border: 1px solid #555; border-radius: 12px; background: #fff; }
.toggle i { width: 18px; height: 18px; border-radius: 50%; background: #666; }
.tb { margin-left: 15px; gap: 9px; }
.undo { width: 38px; }
.undo + .undo { margin-left: 8px; }
.off { opacity: .4; }
.more { margin-left: 16px; }
.doc { margin-left: 30px; gap: 6px; font-size: 14px; }
.search { position: absolute; left: 741px; right: 720px; top: 11px; height: 39px; display: flex; align-items: center; gap: 16px; padding: 0 0 2px 25px; background: #fafafa; border-radius: 4px; box-shadow: 0 1px 3px #0005; }
.search input { flex: 1; font-size: 16px; }
input::placeholder { color: #666; opacity: 1; }
.user { margin-left: auto; display: flex; align-items: center; gap: 11px; font-size: 13px; }
.user b { width: 30px; height: 30px; border-radius: 50%; background: #03614f; color: #fff; font-weight: 400; line-height: 30px; text-align: center; }
.win { display: flex; margin-left: 15px; }
.win button { width: 60px; height: 40px; }

/* Ribbon tabs */
.tabs { display: flex; align-items: center; flex: none; height: 38px; padding: 0 15px; font-size: 16px; }
.tabs a { height: 32px; margin: 4px 12px 0; padding-top: 3px; line-height: 24px; border-bottom: 3px solid transparent; }
.tabs a.file { margin-right: 20px; }
.tabs a.on { font-weight: 700; border-color: #1d6b41; }
.tabs button { height: 30px; gap: 6px; border-radius: 4px; }
.comments { width: 118px; margin-left: auto; background: #fff; }
.tabs .comments { border: 1px solid #777; }
.share { width: 89px; margin-left: 9px; background: #107c41; color: #fff; }

/* Ribbon */
.ribbon { display: flex; flex: none; height: 124px; margin: 0 10px; padding: 6px 0 3px; background: #fff; border-radius: 10px; box-shadow: 0 2px 4px #0003; }
.group { display: flex; flex-direction: column; border-right: 1px solid #ccc; }
.group .body { display: flex; flex: 1; min-height: 0; }
.group footer { display: flex; height: 20px; line-height: 20px; font-size: 12px; text-align: center; white-space: nowrap; }
.group footer span { flex: 1; }
.launch { width: 20px; }
.group .rows { display: flex; flex-direction: column; gap: 10px; padding-top: 8px; }
.row { display: flex; align-items: center; height: 30px; }
.g-clip { width: 216px; } .g-font { width: 292px; } .g-align { width: 364px; } .g-num { width: 200px; }
.g-styles { width: 243px; } .g-cells { width: 180px; } .g-edit { width: 257px; } .g-add { width: 77px; }
.g-font .body, .g-num .body { padding-left: 9px; }
.g-clip .stack { margin-left: 6px; }
.stack { display: flex; flex-direction: column; gap: 4px; }
.stack button { height: 28px; gap: 5px; justify-content: flex-start; }
.far { margin-left: 12px; }
.big { flex-direction: column; justify-content: flex-start; padding-top: 3px; gap: 4px; text-align: center; }
.big span svg { display: inline-block; vertical-align: 3px; }
.paste { width: 50px; margin-left: 16px; }
.paste, .w54 { gap: 6px; }
.w96 { width: 102px; } .w68 { width: 66px; } .w54 { width: 54px; } .w58 { width: 58px; }
.bigs { display: flex; }
.g-styles .body { padding-left: 3px; }
.g-cells .body { padding-left: 8px; }
.g-edit .body { padding-left: 15px; }
.g-edit .stack { width: 113px; }
.g-add .body { padding-left: 4px; }
.ib { width: 32px; height: 30px; font-size: 17px; }
.ch { width: 16px; height: 30px; }
.bold { font-weight: 700; }
.ital { font-family: "Liberation Serif", serif; font-style: italic; font-size: 20px; }
.under { text-decoration: underline; text-underline-offset: 3px; }
.pressed { background: #ececec; border: 1px solid #666; border-radius: 5px; }
.sep { width: 1px; height: 30px; margin: 0 3px 0 2px; background: #ccc; }
.sel { display: grid; align-items: center; height: 30px; border: 1px solid #777; border-radius: 5px; }
.sel select, .sel svg { grid-area: 1 / 1; }
.sel select { appearance: none; width: 100%; height: 28px; padding-left: 2px; outline: 0; }
.sel svg { justify-self: end; margin-right: 3px; pointer-events: none; }
.s-font { width: 144px; } .s-size { width: 61px; margin: 0 3px; } .s-num { width: 180px; }
.s-font select, .s-size select { font: 16px "Lato", sans-serif; }
.aleft { width: 180px; padding-left: 9px; }
.aleft .sep { margin: 0 0 0 1px; }
.aleft .ch { margin-left: -4px; }
.aright { border-left: 1px solid #ccc; padding-left: 11px; height: 84px; }
.txt { gap: 5px; }
.collapse { align-self: flex-end; margin: 0 11px 9px auto; }

/* Formula bar */
.fbar { display: flex; align-items: center; flex: none; height: 48px; padding: 1px 10px 0 11px; }
.namebox, .fx, .formula { display: flex; align-items: center; height: 29px; background: #fff; border: 1px solid #d6d6d6; border-radius: 5px; }
.namebox { width: 125px; padding: 0 5px; }
.namebox input { flex: 1; }
.dots { margin: 0 12px; }
.fx { width: 90px; justify-content: space-around; }
.f { font: italic bold 20px "Liberation Serif", serif; }
.formula { flex: 1; margin-left: 6px; padding-right: 5px; }
.formula input { flex: 1; }

/* Worksheet */
.sheet { display: grid; grid-template: 24px 1fr / 34px 1fr 26px; flex: 1; min-height: 0; overflow: hidden; }
.corner { background: #f0f0f0; border-bottom: 1px solid #ccc; padding: 4px 3px 0 15px; }
.cols { display: flex; overflow: hidden; background: #f0f0f0; border-bottom: 1px solid #bbb; font-size: 16px; line-height: 24px; color: #444; text-align: center; }
.cols span { flex: none; width: 80px; border-right: 1px solid #ccc; }
.cols .cur { background: #dcdcdc; border-bottom: 2px solid #1d6b41; }
.nums { overflow: hidden; background: #f0f0f0; border-right: 1px solid #bbb; font-size: 16px; color: #444; text-align: center; }
.nums span { display: flex; align-items: flex-end; justify-content: center; height: 24px; line-height: 20px; border-bottom: 1px solid #d5d5d5; }
.nums .tall { height: 35px; }
.nums .tall:first-child { height: 34px; }
.nums .cur { background: #dcdcdc; color: #1d6b41; border-right: 2px solid #1d6b41; }
.vscroll { grid-area: 1 / 3 / 3 / 4; display: flex; flex-direction: column; align-items: center; width: 20px; margin-left: 3px; padding: 6px 0 2px; background: #f5f5f5; border-radius: 10px; }
.vscroll i { width: 11px; flex: 0 1 619px; margin: 5px 0 auto; border-radius: 5px; background: #707070; }
.canvas { position: relative; background: #d9d9d9; overflow: hidden; }
.canvas h1 { height: 69px; padding-right: 100px; background: #ed7d31; color: #000; font: 52px/68px "Lato", sans-serif; text-align: center; white-space: nowrap; }
.cell { position: absolute; right: -2px; top: 213px; width: 23px; height: 26px; border: 2px solid #1d6b41; }
.board { display: flex; padding-right: 14px; }
.slicers { width: 350px; flex: none; margin-top: -4px; }
.slicer { width: 302px; padding: 0 10px 10px 9px; background: #fff; border: 1px solid #44699c; position: relative; font: 16px/20px "Lato", sans-serif; color: #000; }
.s2 { margin: 8px 0 11px 2px; width: 303px; }
.s3 { margin-left: 5px; width: 299px; }
.s2, .s3 { padding-left: 10px; }
.slicer header { display: flex; align-items: center; height: 33px; border-bottom: 1px solid #44699c; }
.slicer h3 { flex: 1; font-size: 16px; font-weight: 700; }
.slicer header button { width: 28px; height: 28px; }
.slicer .ms { margin-right: 12px; background: #fbeeae; border: 1px solid #a89a6a; border-radius: 3px; }
.list { display: flex; gap: 5px; margin-top: 5px; height: 124px; }
.s2 .list { height: 139px; }
.s3 .list { height: 145px; }
.items { flex: 1; overflow: hidden; }
.items button { width: 100%; height: 31px; margin-bottom: 4px; padding: 0 0 2px 10px; justify-content: flex-start; border: 1px solid #c4c4c4; border-radius: 4px; background: #fff; }
.items .on { background: #b4c6e7; border-color: #8e95a5; }
.track { width: 22px; background: #f0f0f0; padding: 29px 7px 0; }
.track i { display: block; width: 8px; height: 19px; background: #858585; }
.s2 .track { padding-top: 36px; } .s2 .track i { height: 53px; }
.s3 .track { padding-top: 35px; } .s3 .track i { height: 49px; }

.charts { flex: 1; display: grid; grid-template-columns: 486fr 464fr 522fr; column-gap: 12px; row-gap: 22px; align-items: start; padding-top: 5px; }
.chart { background: #fff; position: relative; color: #595959; }
.chart h2 { height: 46px; padding-top: 15px; font: bold 26px/32px "Lato", sans-serif; text-align: center; white-space: nowrap; }
.chart > svg { width: 100%; height: auto; }
.chart text { font: 13px "Lato", sans-serif; fill: #595959; }
.chart .blk text { fill: #000; }
.chart .dk text { fill: #404040; }
.chart .val text { font-weight: 900; fill: #fff6e2; }
.chart .ui { font: 13px "Open Sans", sans-serif; fill: #111; }
.c1 { margin: 1px 2px 0 0; padding-bottom: 11px; }
.c1 h2 { padding-left: 92px; }
.c2 { margin-left: 2px; box-shadow: inset 0 0 0 1px #7f7f7f; }
.c3 { margin: 1px 10px 0 0; }
.c4 { margin-left: 1px; box-shadow: inset 0 0 0 1px #bfbfbf; }
.c4 h2 { color: #404040; }
.c4 text { fill: #404040; }
.c5 { margin: 3px 4px 0; }
.c6 { margin-top: 3px; }
.field { width: 86px; height: 22px; margin: 6px 0 0 12px; padding: 0 4px; justify-content: space-between; background: linear-gradient(#dedede, #bcbcbc); color: #111; font-size: 13px; }
.tip { position: absolute; left: 48px; top: 73px; width: 144px; height: 26px; line-height: 24px; text-align: center; background: #fafafa; border: 1px solid #ccc; border-radius: 3px; box-shadow: 3px 3px 2px #0008; font-size: 14px; white-space: nowrap; }

/* Sheet tabs */
.sheets { display: flex; flex: none; height: 40px; font-size: 16px; padding-right: 23px; }
.sheets .nav { display: flex; width: 141px; padding-left: 16px; }
.sheets .nav button { width: 40px; height: 38px; }
.sheets a { width: 86px; height: 32px; margin-top: 4px; padding-top: 4px; line-height: 26px; text-align: center; border-right: 1px solid #ccc; color: #333; }
.sheets .w { width: 92px; }
.sheets .w2 { width: 106px; }
.sheets .on { width: 128px; height: 36px; margin: 0 5px 0 0; padding: 4px 0 0; background: #fff; border: 0; border-radius: 0 0 6px 6px; font-size: 17px; font-weight: 600; }
.sheets .on span { display: inline-block; height: 28px; border-bottom: 2px solid #1d6b41; }
.plus { width: 40px; height: 38px; margin-left: 38px; }
.sheets .dots { margin: 12px 18px 0 auto; }
.hscroll { display: flex; align-items: center; width: 721px; height: 22px; margin-top: 9px; padding: 0 7px; background: #f5f5f5; border-radius: 11px; }
.hscroll i { width: 354px; height: 11px; margin: 0 auto 0 4px; border-radius: 5px; background: #707070; }

/* Status bar */
.status { display: flex; align-items: center; flex: none; height: 28px; padding: 0 9px 0 14px; background: #f5f5f5; border-bottom: 1px solid #b0b0b0; font-size: 13px; }
.acc { margin-left: 24px; gap: 3px; font-weight: 600; font-size: 13px; }
.views { display: flex; margin-left: auto; }
.views button { width: 50px; height: 27px; }
.views .on { background: #e0e0e0; }
.zb { width: 22px; height: 27px; }
.status input { appearance: none; width: 126px; height: 16px; background: linear-gradient(#555, #555) center / 100% 1px no-repeat; }
.status input::-webkit-slider-thumb { appearance: none; width: 6px; height: 14px; background: #555; }
.pct { width: 32px; margin-left: 10px; font-size: 12px; }

/* Taskbar */
.taskbar { display: flex; align-items: center; flex: none; height: 59px; padding: 0 24px 2px 22px; background: #dadada; font-size: 14px; }
.weather { gap: 6px; text-align: left; line-height: 20px; }
.weather em { font-style: normal; color: #555; }
.badge { font: 14px "Open Sans", sans-serif; fill: #fff; }
.pre { font: bold 9px "Open Sans", sans-serif; fill: #222; }
.apps { display: flex; align-items: center; position: absolute; left: 520px; }
.apps button { width: 48px; height: 50px; margin-right: 7px; border-radius: 5px; }
.apps .run { background: linear-gradient(#777, #777) center 43px / 8px 4px no-repeat; }
.apps .act { background: linear-gradient(#a050b8, #a050b8) center 45px / 20px 4px no-repeat, #efefef; }
.tsearch { display: flex; align-items: center; gap: 12px; width: 273px; height: 40px; margin: 0 7px 0 2px; padding: 0 10px 0 12px; background: #f4f4f4; border: 1px solid #ccc; border-radius: 20px; }
.tsearch input { flex: 1; font-size: 16px; }
.tray { display: flex; align-items: center; margin-left: auto; line-height: 20px; }
.od { margin-left: 23px; }
.lang { width: 40px; margin-left: 18px; }
.net { gap: 10px; margin-left: 17px; }
.clock { width: 90px; margin-left: 8px; justify-content: flex-end; text-align: right; }
.bell { margin: 0 24px 0 10px; }
```
